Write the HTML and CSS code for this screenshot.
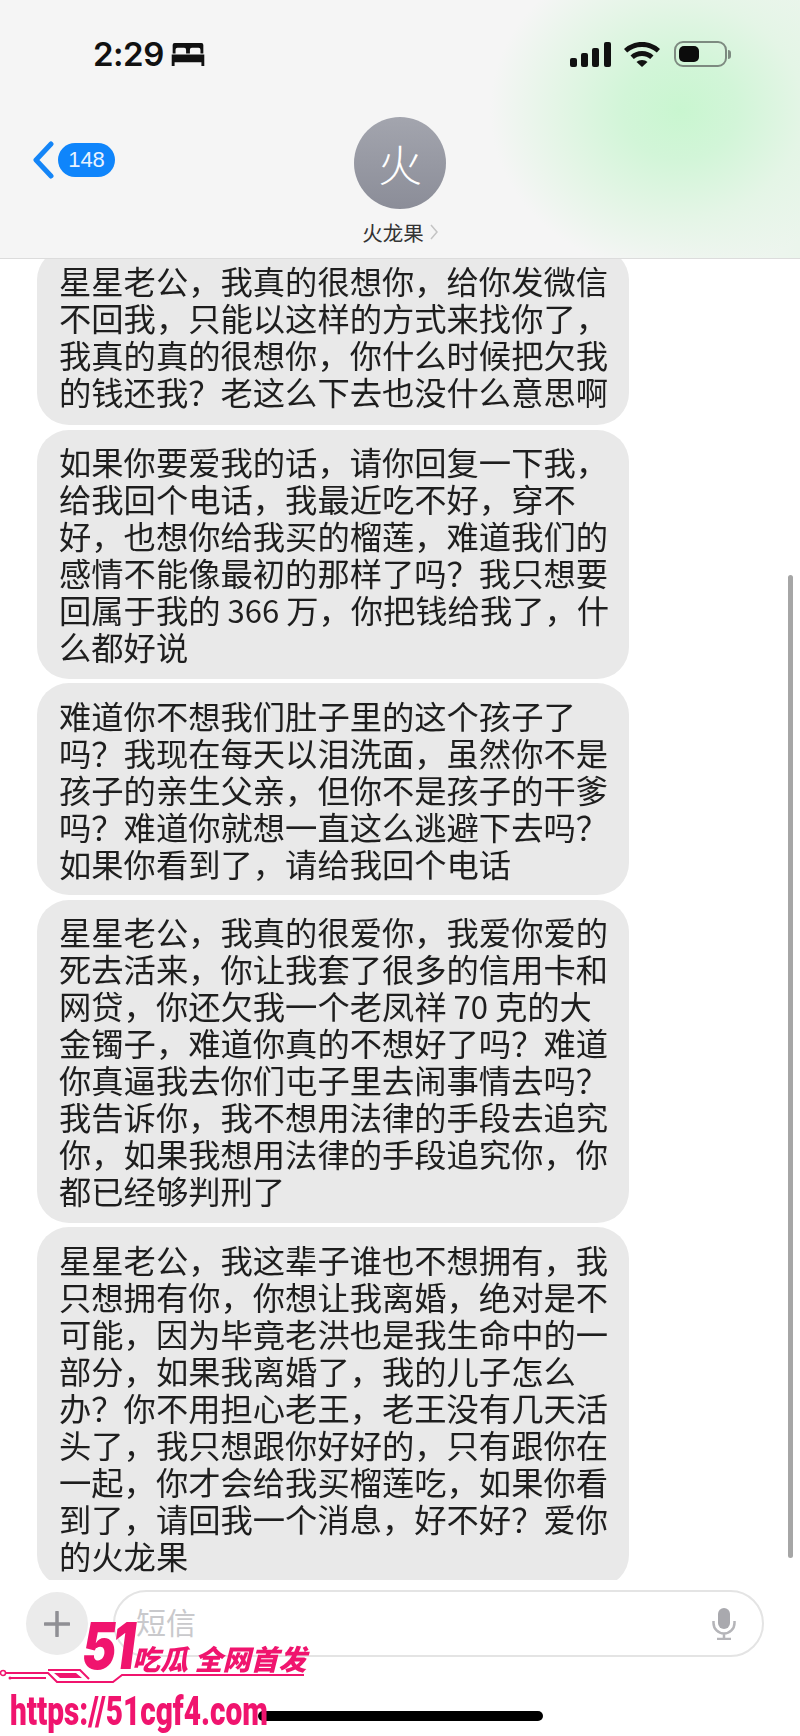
FILE: index.html
```html
<!DOCTYPE html>
<html lang="zh-CN">
<head>
<meta charset="utf-8">
<title>火龙果</title>
<link rel="stylesheet" href="styles.css">
</head>
<body>
<div class="phone">
  <header class="header">
    <div class="status">
      <div class="status-left">
        <span class="time">2:29</span>
        <svg class="bed" viewBox="0 0 34 24"><path d="M3 0h28a2 2 0 0 1 2 2v9h-3V7a2 2 0 0 0-2-2h-7a2 2 0 0 0-2 2v4h-4V7a2 2 0 0 0-2-2H6a2 2 0 0 0-2 2v4H1V2a2 2 0 0 1 2-2zM0 12h34v12h-3v-4H3v4H0z"/></svg>
      </div>
      <div class="status-right">
        <svg class="signal" viewBox="0 0 41 25"><rect x="0" y="16" width="7" height="9" rx="2"/><rect x="11" y="11" width="7" height="14" rx="2"/><rect x="22" y="6" width="7" height="19" rx="2"/><rect x="34" y="0" width="7" height="25" rx="2"/></svg>
        <svg class="wifi" viewBox="0 0 36 25"><path d="M18 0c7 0 13.500 2.700 18 7l-3.200 3.600C29 7 23.800 5 18 5S7 7 3.200 10.600L0 7C4.500 2.700 11 0 18 0z"/><path d="M18 9c4.500 0 8.500 1.700 11.500 4.500l-3.300 3.600C24 15.100 21.200 14 18 14s-6 1.100-8.200 3.100l-3.300-3.600C9.500 10.700 13.500 9 18 9z"/><path d="M18 18c2.200 0 4.100.8 5.500 2L18 25l-5.500-5c1.400-1.200 3.300-2 5.500-2z"/></svg>
        <div class="battery"><div class="battery-fill"></div></div>
        <div class="battery-tip"></div>
      </div>
    </div>
    <div class="nav">
      <div class="back">
        <svg class="chevron" viewBox="0 0 22 38"><path d="M19 3 4 19l15 16"/></svg>
        <span class="badge">148</span>
      </div>
      <div class="contact">
        <div class="avatar">火</div>
        <div class="name">火龙果<svg class="name-chevron" viewBox="0 0 8 16"><path d="m1 1 6 7-6 7"/></svg></div>
      </div>
    </div>
  </header>

  <main class="thread">
    <div class="list">
      <p class="bubble">星星老公&#65292;我真的很想你&#65292;给你发微信<br>不回我&#65292;只能以这样的方式来找你了&#65292;<br>我真的真的很想你&#65292;你什么时候把欠我<br>的钱还我&#65311;老这么下去也没什么意思啊</p>
      <p class="bubble">如果你要爱我的话&#65292;请你回复一下我&#65292;<br>给我回个电话&#65292;我最近吃不好&#65292;穿不<br>好&#65292;也想你给我买的榴莲&#65292;难道我们的<br>感情不能像最初的那样了吗&#65311;我只想要<br>回属于我的<span class="num">366</span>万&#65292;你把钱给我了&#65292;什<br>么都好说</p>
      <p class="bubble">难道你不想我们肚子里的这个孩子了<br>吗&#65311;我现在每天以泪洗面&#65292;虽然你不是<br>孩子的亲生父亲&#65292;但你不是孩子的干爹<br>吗&#65311;难道你就想一直这么逃避下去吗&#65311;<br>如果你看到了&#65292;请给我回个电话</p>
      <p class="bubble">星星老公&#65292;我真的很爱你&#65292;我爱你爱的<br>死去活来&#65292;你让我套了很多的信用卡和<br>网贷&#65292;你还欠我一个老凤祥<span class="num">70</span>克的大<br>金镯子&#65292;难道你真的不想好了吗&#65311;难道<br>你真逼我去你们屯子里去闹事情去吗&#65311;<br>我告诉你&#65292;我不想用法律的手段去追究<br>你&#65292;如果我想用法律的手段追究你&#65292;你<br>都已经够判刑了</p>
      <p class="bubble">星星老公&#65292;我这辈子谁也不想拥有&#65292;我<br>只想拥有你&#65292;你想让我离婚&#65292;绝对是不<br>可能&#65292;因为毕竟老洪也是我生命中的一<br>部分&#65292;如果我离婚了&#65292;我的儿子怎么<br>办&#65311;你不用担心老王&#65292;老王没有几天活<br>头了&#65292;我只想跟你好好的&#65292;只有跟你在<br>一起&#65292;你才会给我买榴莲吃&#65292;如果你看<br>到了&#65292;请回我一个消息&#65292;好不好&#65311;爱你<br>的火龙果</p>
    </div>
    <div class="scrollbar"></div>
  </main>

  <footer class="composer">
    <div class="plus"><svg viewBox="0 0 26 26"><path d="M13 1v24M1 13h24"/></svg></div>
    <div class="input">
      <span class="placeholder">短信</span>
      <svg class="mic" viewBox="0 0 24 32"><rect x="6" y="0" width="12" height="21" rx="6"/><path class="mic-arc" d="M1.500 13v2a10.500 10.500 0 0 0 21 0v-2M12 26v5M5 31h14"/></svg>
    </div>
  </footer>

  <div class="home-bar"></div>

  <div class="watermark">
    <div class="wm-top">
      <span class="wm-51">51</span>
      <span class="wm-text">吃瓜 全网首发</span>
      <svg class="wm-play" viewBox="0 0 10 10"><path d="M1 1l8 4-8 4z"/></svg>
    </div>
    <svg class="wm-circuit" viewBox="0 0 310 24"><path class="wm-line" d="M6 5h42l9 9h56l9-7h182M48 2h32l9 9M10 10h36"/><path class="wm-fill" d="M54 5h22l6 5H60z"/><circle class="wm-dot" cx="3" cy="5" r="2.500"/><circle class="wm-dot2" cx="10" cy="10" r="1.500"/></svg>
    <div class="wm-url">https://51cgf4.com</div>
  </div>
</div>
</body>
</html>
```

FILE: styles.css
```css
* { box-sizing: border-box; }
html, body { margin: 0; padding: 0; background: #fff; }
.phone {
  position: relative;
  width: 800px;
  height: 1736px;
  display: flex;
  flex-direction: column;
  overflow: hidden;
  font-family: "Noto Sans CJK SC", "Liberation Sans", sans-serif;
  filter: blur(0.6px);
}

/* Header */
.header {
  height: 259px;
  flex: none;
  position: relative;
  z-index: 2;
  background:
    radial-gradient(ellipse 190px 165px at 680px 110px, #c9f6d0 0%, #d2f5d8 30%, #e4f5e6 65%, rgba(245,245,245,0) 100%),
    linear-gradient(90deg, rgba(245,245,245,0) 82%, rgba(228,245,230,0.6) 100%),
    #f5f5f5;
  border-bottom: 1px solid #dcdcdc;
}
.status {
  height: 26px;
  padding: 0 69px 0 93px;
  display: flex;
  justify-content: space-between;
  align-items: center;
  position: absolute;
  top: 41px; left: 0; right: 0;
}
.status-left { display: flex; align-items: center; gap: 7px; }
.time {
  font-family: Inter, "Liberation Sans", sans-serif;
  font-weight: 600;
  font-size: 33px;
  line-height: 26px;
  letter-spacing: -0.5px;
  color: #111;
}
.bed { width: 34px; height: 23px; fill: #111; }
.status-right { display: flex; align-items: center; }
.signal { width: 41px; height: 25px; fill: #111; margin-right: 13px; }
.wifi { width: 36px; height: 25px; fill: #111; margin-right: 14px; }
.battery {
  width: 53px;
  height: 26px;
  border: 2px solid #7d8a80;
  border-radius: 9px;
  padding: 3px;
}
.battery-fill { width: 20px; height: 100%; background: #0c0c0c; border-radius: 5px; }
.battery-tip { width: 3px; height: 9px; background: #7d8a80; border-radius: 0 3px 3px 0; margin-left: 1px; }

.nav { position: absolute; top: 117px; left: 0; right: 0; }
.back {
  position: absolute;
  top: 24px;
  left: 32px;
  display: flex;
  align-items: center;
  gap: 4px;
}
.chevron { width: 22px; height: 38px; fill: none; stroke: #1485f7; stroke-width: 5; stroke-linecap: round; stroke-linejoin: round; }
.badge {
  width: 57px;
  height: 34px;
  border-radius: 17px;
  background: #0f85fb;
  color: #e8f3ff;
  font-family: "Liberation Sans", sans-serif;
  font-size: 22px;
  line-height: 34px;
  text-align: center;
}
.contact { display: flex; flex-direction: column; align-items: center; }
.avatar {
  width: 92px;
  height: 92px;
  border-radius: 50%;
  background: linear-gradient(#a3a5ae, #8b8d98);
  color: #fff;
  font-size: 44px;
  font-weight: 300;
  line-height: 92px;
  text-align: center;
}
.name {
  margin-top: 10px;
  font-size: 20.500px;
  line-height: 26px;
  color: #333;
  display: flex;
  align-items: center;
  gap: 6px;
}
.name-chevron { width: 8px; height: 16px; fill: none; stroke: #c4c4c4; stroke-width: 1.500; }

/* Thread */
.thread { flex: 1; min-height: 0; position: relative; overflow: hidden; }
.list {
  margin: -11px 0 0 37px;
  width: 592px;
  display: flex;
  flex-direction: column;
  gap: 4.600px;
}
.bubble {
  margin: 0;
  padding: 13.500px 0 13.500px 22px;
  background: #e9e9e9;
  border-radius: 32px;
  font-size: 32.300px;
  line-height: 37px;
  color: #1e1e1e;
  white-space: nowrap;
}
.bubble:first-child { padding-bottom: 15.500px; }
.num { font-size: 31px; line-height: 30px; margin: 0 7px; }
.scrollbar {
  position: absolute;
  right: 7px;
  top: 316px;
  width: 5px;
  height: 983px;
  border-radius: 3px;
  background: #a6a6a6;
}

/* Composer */
.composer {
  flex: none;
  height: 156px;
  padding: 10px 36px 0 26px;
  display: flex;
  gap: 25px;
  align-items: flex-start;
  background: #fff;
}
.plus {
  width: 62px;
  height: 63px;
  margin-top: 2px;
  border-radius: 50%;
  background: #ebebeb;
  display: flex;
  align-items: center;
  justify-content: center;
  flex: none;
}
.plus svg { width: 26px; height: 26px; fill: none; stroke: #8f8f94; stroke-width: 3.500; stroke-linecap: round; }
.input {
  flex: 1;
  height: 67px;
  border: 2px solid #e4e4e4;
  border-radius: 34px;
  display: flex;
  align-items: center;
  justify-content: space-between;
  padding: 0 26px 0 21px;
}
.placeholder { font-size: 30px; line-height: 40px; color: #c9c9cc; margin-top: -6px; }
.mic { width: 24px; height: 32px; }
.mic rect { fill: #a9a9ae; }
.mic-arc { fill: none; stroke: #b5b5b9; stroke-width: 2.500; }

.home-bar {
  position: absolute;
  left: 258px;
  top: 1711px;
  width: 285px;
  height: 10px;
  border-radius: 5px;
  background: #000;
}

/* Watermark */
.watermark {
  position: absolute;
  left: 0;
  top: 1620px;
  width: 320px;
  color: #f0146e;
  z-index: 3;
}
.wm-top {
  position: relative;
  display: flex;
  align-items: flex-end;
  margin-left: 82px;
  height: 52px;
}
.wm-51 {
  font-family: Inter, "Liberation Sans", sans-serif;
  font-weight: 900;
  font-style: italic;
  font-size: 64px;
  line-height: 52px;
  letter-spacing: -5px;
  width: 50px;
  transform: scaleX(0.8);
  transform-origin: left center;
}
.wm-text {
  font-weight: 900;
  font-style: italic;
  font-size: 28px;
  line-height: 30px;
  white-space: nowrap;
  margin-bottom: -1px;
}
.wm-play {
  position: absolute;
  left: 13px;
  top: 27px;
  width: 8px;
  height: 8px;
  fill: #fff;
}
.wm-circuit {
  display: block;
  width: 310px;
  height: 24px;
  margin-top: -4px;
  fill: none;
}
.wm-line { stroke: #f0146e; fill: none; stroke-width: 2; }
.wm-fill { fill: #f0146e; }
.wm-dot { stroke: #f0146e; stroke-width: 1.500; fill: #fff; }
.wm-dot2 { fill: #f0146e; }
.wm-url {
  margin: -2px 0 0 10px;
  font-family: Roboto, "Liberation Sans", sans-serif;
  font-weight: 900;
  font-size: 40px;
  line-height: 44px;
  white-space: nowrap;
  transform: scaleX(0.745);
  transform-origin: left center;
}
```
